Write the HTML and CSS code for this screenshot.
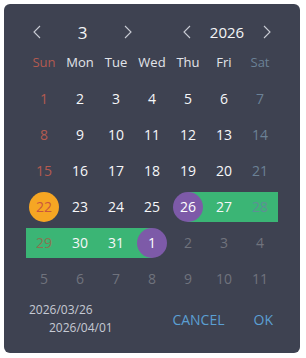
FILE: index.html
```html
<!DOCTYPE html>
<html>
<head>
<meta charset="utf-8">
<link rel="stylesheet" href="styles.css">
</head>
<body>
<div class="picker">
  <div class="header">
    <button class="nav"><svg width="10" height="14" viewBox="0 0 10 14"><polyline points="8,1 2,7 8,13" fill="none" stroke="#c9ccd4" stroke-width="1.1"/></svg></button>
    <div class="month">3</div>
    <button class="nav"><svg width="10" height="14" viewBox="0 0 10 14"><polyline points="2,1 8,7 2,13" fill="none" stroke="#c9ccd4" stroke-width="1.1"/></svg></button>
    <div></div>
    <button class="nav"><svg width="10" height="14" viewBox="0 0 10 14"><polyline points="8,1 2,7 8,13" fill="none" stroke="#c9ccd4" stroke-width="1.1"/></svg></button>
    <div class="year">2026</div>
    <button class="nav"><svg width="10" height="14" viewBox="0 0 10 14"><polyline points="2,1 8,7 2,13" fill="none" stroke="#c9ccd4" stroke-width="1.1"/></svg></button>
  </div>
  <div class="weekdays">
    <div class="sun">Sun</div><div>Mon</div><div>Tue</div><div>Wed</div><div>Thu</div><div>Fri</div><div class="sat">Sat</div>
  </div>
  <div class="days">
    <div class="day sun"><span class="num">1</span></div>
    <div class="day"><span class="num">2</span></div>
    <div class="day"><span class="num">3</span></div>
    <div class="day"><span class="num">4</span></div>
    <div class="day"><span class="num">5</span></div>
    <div class="day"><span class="num">6</span></div>
    <div class="day sat"><span class="num">7</span></div>

    <div class="day sun"><span class="num">8</span></div>
    <div class="day"><span class="num">9</span></div>
    <div class="day"><span class="num">10</span></div>
    <div class="day"><span class="num">11</span></div>
    <div class="day"><span class="num">12</span></div>
    <div class="day"><span class="num">13</span></div>
    <div class="day sat"><span class="num">14</span></div>

    <div class="day sun"><span class="num">15</span></div>
    <div class="day"><span class="num">16</span></div>
    <div class="day"><span class="num">17</span></div>
    <div class="day"><span class="num">18</span></div>
    <div class="day"><span class="num">19</span></div>
    <div class="day"><span class="num">20</span></div>
    <div class="day sat"><span class="num">21</span></div>

    <div class="day today"><span class="num">22</span></div>
    <div class="day"><span class="num">23</span></div>
    <div class="day"><span class="num">24</span></div>
    <div class="day"><span class="num">25</span></div>
    <div class="day range-start"><span class="num sel">26</span></div>
    <div class="day range"><span class="num">27</span></div>
    <div class="day range sat-in"><span class="num">28</span></div>

    <div class="day range sun-in"><span class="num">29</span></div>
    <div class="day range"><span class="num">30</span></div>
    <div class="day range"><span class="num">31</span></div>
    <div class="day range-end"><span class="num sel">1</span></div>
    <div class="day other"><span class="num">2</span></div>
    <div class="day other"><span class="num">3</span></div>
    <div class="day other"><span class="num">4</span></div>

    <div class="day other"><span class="num">5</span></div>
    <div class="day other"><span class="num">6</span></div>
    <div class="day other"><span class="num">7</span></div>
    <div class="day other"><span class="num">8</span></div>
    <div class="day other"><span class="num">9</span></div>
    <div class="day other"><span class="num">10</span></div>
    <div class="day other"><span class="num">11</span></div>
  </div>
  <div class="footer">
    <div class="dates">
      <div class="d1">2026/03/26</div>
      <div class="d2">2026/04/01</div>
    </div>
    <div class="actions">
      <button class="btn">CANCEL</button>
      <button class="btn">OK</button>
    </div>
  </div>
</div>
</body>
</html>
```
FILE: styles.css
```css
html, body {
  margin: 0;
  padding: 0;
  background: #ffffff;
}
body {
  padding: 4px;
  font-family: "Open Sans", "Noto Sans", sans-serif;
}
.picker {
  width: 296px;
  height: 349px;
  box-sizing: border-box;
  background: #3e4251;
  border-radius: 6px;
  padding: 14px 22px 0 22px;
  color: #f2f3f5;
}
.header {
  display: grid;
  grid-template-columns: 22px 69px 22px 37px 22px 58px 22px;
  height: 28px;
  align-items: center;
}
.nav {
  background: none;
  border: 0;
  padding: 0;
  height: 28px;
  display: flex;
  align-items: center;
  justify-content: center;
}
.month {
  text-align: center;
  font-size: 17px;
  color: #f4f5f7;
}
.year {
  text-align: center;
  font-size: 15px;
  color: #f4f5f7;
}
.weekdays {
  margin-top: 4px;
  display: grid;
  grid-template-columns: repeat(7, 36px);
  height: 24px;
  align-items: center;
  font-size: 13px;
  color: #e3e5ea;
  text-align: center;
}
.weekdays .sun { color: #b35a50; }
.weekdays .sat { color: #6b8196; }
.days {
  margin-top: 7px;
  display: grid;
  grid-template-columns: repeat(7, 36px);
  grid-auto-rows: 36px;
  font-size: 14px;
}
.day {
  display: flex;
  align-items: center;
  justify-content: center;
  color: #f6f7f9;
}
.day.sun { color: #b35a50; }
.day.sat { color: #6b8196; }
.day.other { color: #70737d; }
.num {
  width: 30px;
  height: 30px;
  border-radius: 50%;
  display: flex;
  align-items: center;
  justify-content: center;
  line-height: 1;
}
.today .num {
  background: #f6a623;
  color: #c9563f;
}
.num.sel {
  background: #7d5aa8;
  color: #ffffff;
}
.range {
  background: linear-gradient(#3bb575, #3bb575) center / 100% 30px no-repeat;
}
.range-start {
  background: linear-gradient(#3bb575, #3bb575) right center / 50% 30px no-repeat;
}
.range-end {
  background: linear-gradient(#3bb575, #3bb575) left center / 50% 30px no-repeat;
}
.range.sat-in { color: #5f8f95; }
.range.sun-in { color: #8a7250; }
.footer {
  margin-top: 4px;
  display: flex;
  align-items: center;
  justify-content: space-between;
}
.dates {
  font-size: 12px;
  line-height: 18px;
  color: #c6cad4;
  padding-left: 3px;
}
.d2 { padding-left: 20px; }
.actions {
  display: flex;
  gap: 29px;
  padding-right: 5px;
}
.btn {
  background: none;
  border: 0;
  padding: 0;
  font-family: "Open Sans", "Noto Sans", sans-serif;
  font-size: 14px;
  color: #5b9fd3;
}
```
